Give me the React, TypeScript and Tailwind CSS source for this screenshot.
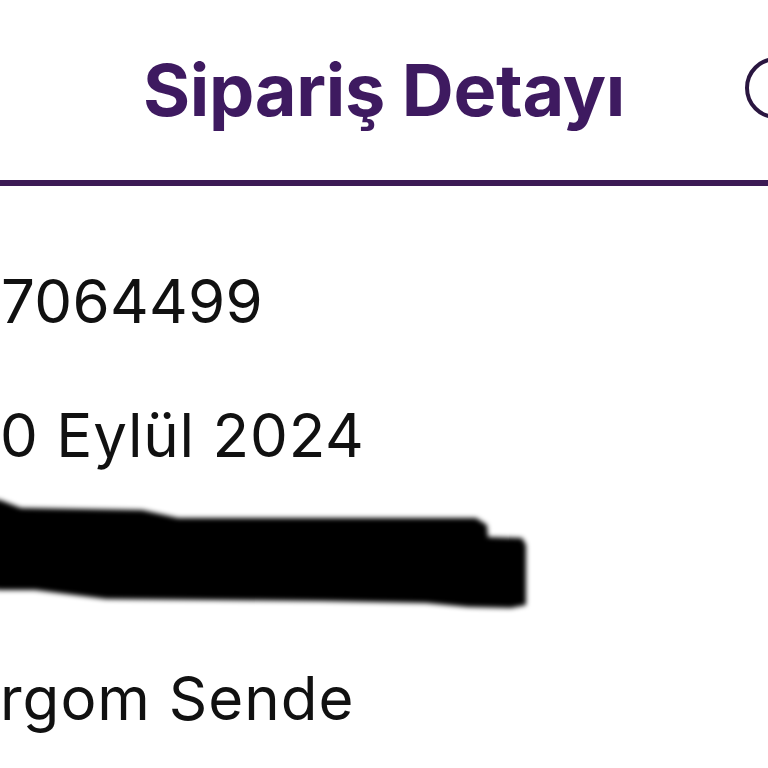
export default function App() {
  return (
    <div className="w-[768px] h-[768px] overflow-hidden bg-white text-black" style={{ fontFamily: 'Inter, "Noto Sans", sans-serif' }}>
      {/* Header */}
      <div className="relative h-[180px] flex items-center justify-center">
        <h1 className="text-[72px] leading-none font-bold text-[#3e1a60] tracking-[-0.3px]">Sipariş Detayı</h1>
        <div className="absolute right-[-39px] top-[57px] w-[62px] h-[62px] rounded-full border-[4px] border-[#2a1640]" />
      </div>
      <div className="h-[6px] bg-[#3c1a55]" />

      {/* Order info */}
      <div className="flex flex-col text-[60px] leading-none text-[#111]">
        <div className="mt-[85px] h-[60px] pl-[1px] tracking-[0.3px]">7064499</div>
        <div className="mt-[74px] h-[60px] tracking-[0.8px]">0 Eylül 2024</div>
        <svg className="block" width="768" height="150" viewBox="0 0 768 150">
          <defs>
            <filter id="blur" x="-10%" y="-20%" width="120%" height="140%">
              <feGaussianBlur stdDeviation="2.4" />
            </filter>
          </defs>
          <path
            d="M -10 33 L 0 35 L 21 43 L 142 45 L 178 53 L 476 53 L 487 60 L 488 72 L 522 73 L 526 80 L 526 140 L 511 143 L 468 142 L 426 138 L 320 136 L 213 135 L 106 134 L 35 125 L 0 125 L -10 124 Z"
            fill="#000"
            filter="url(#blur)"
          />
        </svg>
        <div className="mt-[53px] h-[60px] tracking-[1px]">rgom Sende</div>
      </div>
    </div>
  )
}
